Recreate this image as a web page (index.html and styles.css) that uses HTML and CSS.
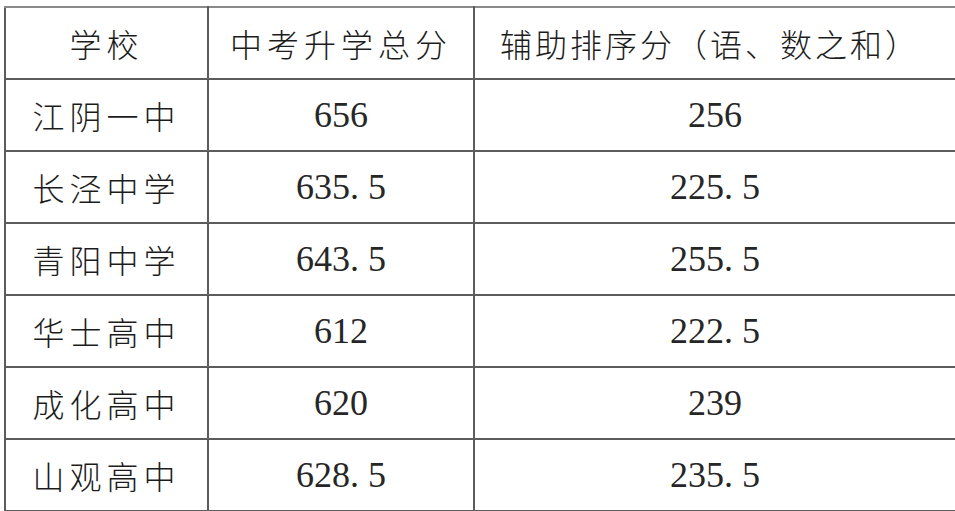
FILE: index.html
```html
<!DOCTYPE html>
<html lang="zh-CN">
<head>
<meta charset="utf-8">
<title>中考升学总分</title>
<link rel="stylesheet" href="styles.css">
</head>
<body>
<table class="scores">
  <colgroup>
    <col class="c1"><col class="c2"><col class="c3">
  </colgroup>
  <tr class="head">
    <td class="zh">学校</td>
    <td class="zh">中考升学总分</td>
    <td class="zh tight">辅助排序分（语、数之和）</td>
  </tr>
  <tr>
    <td class="zh">江阴一中</td>
    <td class="num">656</td>
    <td class="num">256</td>
  </tr>
  <tr>
    <td class="zh">长泾中学</td>
    <td class="num">635<span class="dot">.</span>5</td>
    <td class="num">225<span class="dot">.</span>5</td>
  </tr>
  <tr>
    <td class="zh">青阳中学</td>
    <td class="num">643<span class="dot">.</span>5</td>
    <td class="num">255<span class="dot">.</span>5</td>
  </tr>
  <tr>
    <td class="zh">华士高中</td>
    <td class="num">612</td>
    <td class="num">222<span class="dot">.</span>5</td>
  </tr>
  <tr>
    <td class="zh">成化高中</td>
    <td class="num">620</td>
    <td class="num">239</td>
  </tr>
  <tr>
    <td class="zh">山观高中</td>
    <td class="num">628<span class="dot">.</span>5</td>
    <td class="num">235<span class="dot">.</span>5</td>
  </tr>
</table>
</body>
</html>
```
FILE: styles.css
```css
html, body {
  margin: 0;
  padding: 0;
  background: #ffffff;
}

.scores {
  border-collapse: collapse;
  table-layout: fixed;
  width: 951px;
  margin: 6px 0 0 4px;
  color: #1c1c1c;
}

.c1 { width: 203px; }
.c2 { width: 266px; }
.c3 { width: 482px; }

.scores tr {
  height: 72px;
}

.scores td {
  border: 2px solid #5c5c5c;
  padding: 0;
  text-align: center;
  vertical-align: middle;
  line-height: 1;
}

.head td {
  border-top-color: #8a8a8a;
}

.zh {
  font-family: "Noto Sans CJK SC", "Noto Sans", sans-serif;
  font-size: 32px;
  font-weight: 300;
  letter-spacing: 5px;
  padding-left: 5px;
}

.zh.tight {
  letter-spacing: 3px;
  padding-left: 0;
  padding-right: 10px;
}

.num {
  font-family: "Liberation Serif", "DejaVu Serif", serif;
  font-size: 36px;
  color: #262626;
}

.dot {
  display: inline-block;
  width: 18px;
  text-align: left;
}
```
